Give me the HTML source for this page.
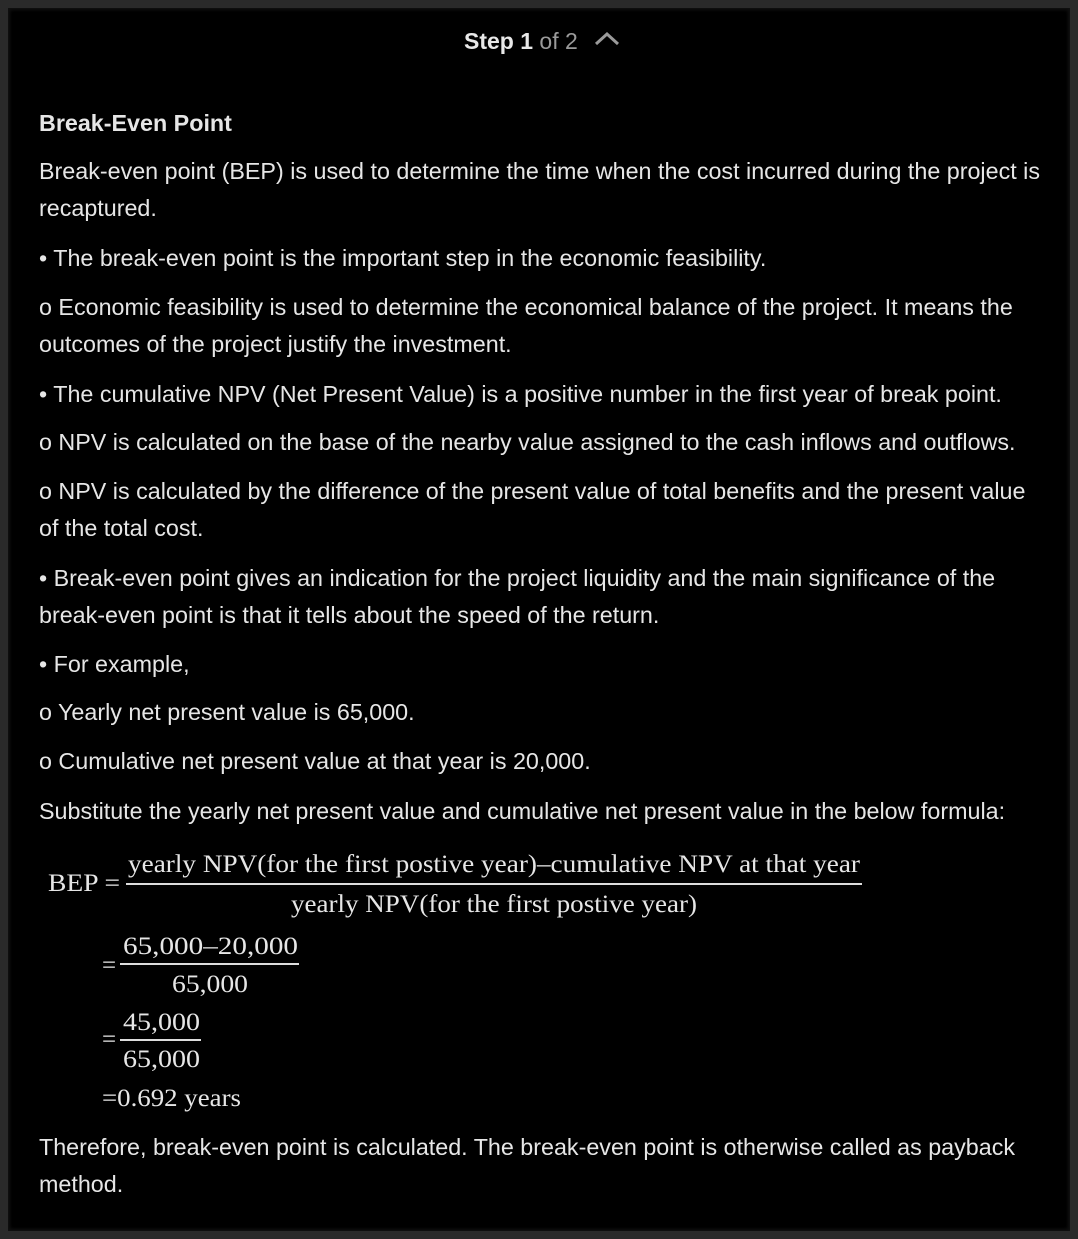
<!DOCTYPE html>
<html><head><meta charset="utf-8"><style>
html,body{margin:0;padding:0;background:#000;}
body{width:1078px;height:1239px;position:relative;overflow:hidden;font-family:"Liberation Sans",Arial,sans-serif;color:#e6e6e6;}
.frame{position:absolute;left:0;top:0;width:1078px;height:1239px;background:#2a2a2a;}
.panel{position:absolute;left:8px;top:8px;width:1062px;height:1223px;background:#000;box-shadow:0 0 3px 2px #111 inset;}
.l{position:absolute;left:39px;font-size:23.3px;line-height:26px;white-space:nowrap;}
</style></head><body>
<div class="frame"></div><div class="panel"></div>
<div style="position:absolute;left:464px;top:28px;font-size:23px;line-height:26px;color:#e8e8e8;"><b>Step 1</b> <span style="color:#9a9a9a">of 2</span></div>
<svg style="position:absolute;left:594px;top:31px" width="26" height="16"><path d="M2 13 L13 3 L24 13" stroke="#9a9a9a" stroke-width="3" fill="none"/></svg>
<div class="l" style="top:110px;font-weight:bold;">Break-Even Point</div>
<div class="l" style="top:158px">Break-even point (BEP) is used to determine the time when the cost incurred during the project is</div>
<div class="l" style="top:195px">recaptured.</div>
<div class="l" style="top:245px">• The break-even point is the important step in the economic feasibility.</div>
<div class="l" style="top:294px">o Economic feasibility is used to determine the economical balance of the project. It means the</div>
<div class="l" style="top:331px">outcomes of the project justify the investment.</div>
<div class="l" style="top:381px">• The cumulative NPV (Net Present Value) is a positive number in the first year of break point.</div>
<div class="l" style="top:429px">o NPV is calculated on the base of the nearby value assigned to the cash inflows and outflows.</div>
<div class="l" style="top:478px">o NPV is calculated by the difference of the present value of total benefits and the present value</div>
<div class="l" style="top:515px">of the total cost.</div>
<div class="l" style="top:565px">• Break-even point gives an indication for the project liquidity and the main significance of the</div>
<div class="l" style="top:602px">break-even point is that it tells about the speed of the return.</div>
<div class="l" style="top:651px">• For example,</div>
<div class="l" style="top:699px">o Yearly net present value is 65,000.</div>
<div class="l" style="top:748px">o Cumulative net present value at that year is 20,000.</div>
<div class="l" style="top:798px">Substitute the yearly net present value and cumulative net present value in the below formula:</div>
<svg style="position:absolute;left:0;top:840px" width="1078" height="280" font-family="Liberation Serif,Times New Roman,serif" fill="#e6e6e6">
<text x="48" y="51" font-size="25" textLength="72" lengthAdjust="spacingAndGlyphs">BEP =</text>
<text x="128" y="32" font-size="25" textLength="732" lengthAdjust="spacingAndGlyphs">yearly NPV(for the first postive year)–cumulative NPV at that year</text>
<rect x="126" y="43" width="736" height="2" fill="#ddd"/>
<text x="291" y="72" font-size="25" textLength="406" lengthAdjust="spacingAndGlyphs">yearly NPV(for the first postive year)</text>
<text x="102" y="133" font-size="25">=</text>
<text x="123" y="114" font-size="25" textLength="175" lengthAdjust="spacingAndGlyphs">65,000–20,000</text>
<rect x="120" y="123" width="179" height="2" fill="#ddd"/>
<text x="172" y="152" font-size="25" textLength="76" lengthAdjust="spacingAndGlyphs">65,000</text>
<text x="102" y="207" font-size="25">=</text>
<text x="123" y="190" font-size="25" textLength="77" lengthAdjust="spacingAndGlyphs">45,000</text>
<rect x="120" y="199" width="81" height="2" fill="#ddd"/>
<text x="123" y="227" font-size="25" textLength="77" lengthAdjust="spacingAndGlyphs">65,000</text>
<text x="102" y="266" font-size="25" textLength="139" lengthAdjust="spacingAndGlyphs">=0.692 years</text>
</svg>
<div class="l" style="top:1134px">Therefore, break-even point is calculated. The break-even point is otherwise called as payback</div>
<div class="l" style="top:1171px">method.</div>
</body></html>
